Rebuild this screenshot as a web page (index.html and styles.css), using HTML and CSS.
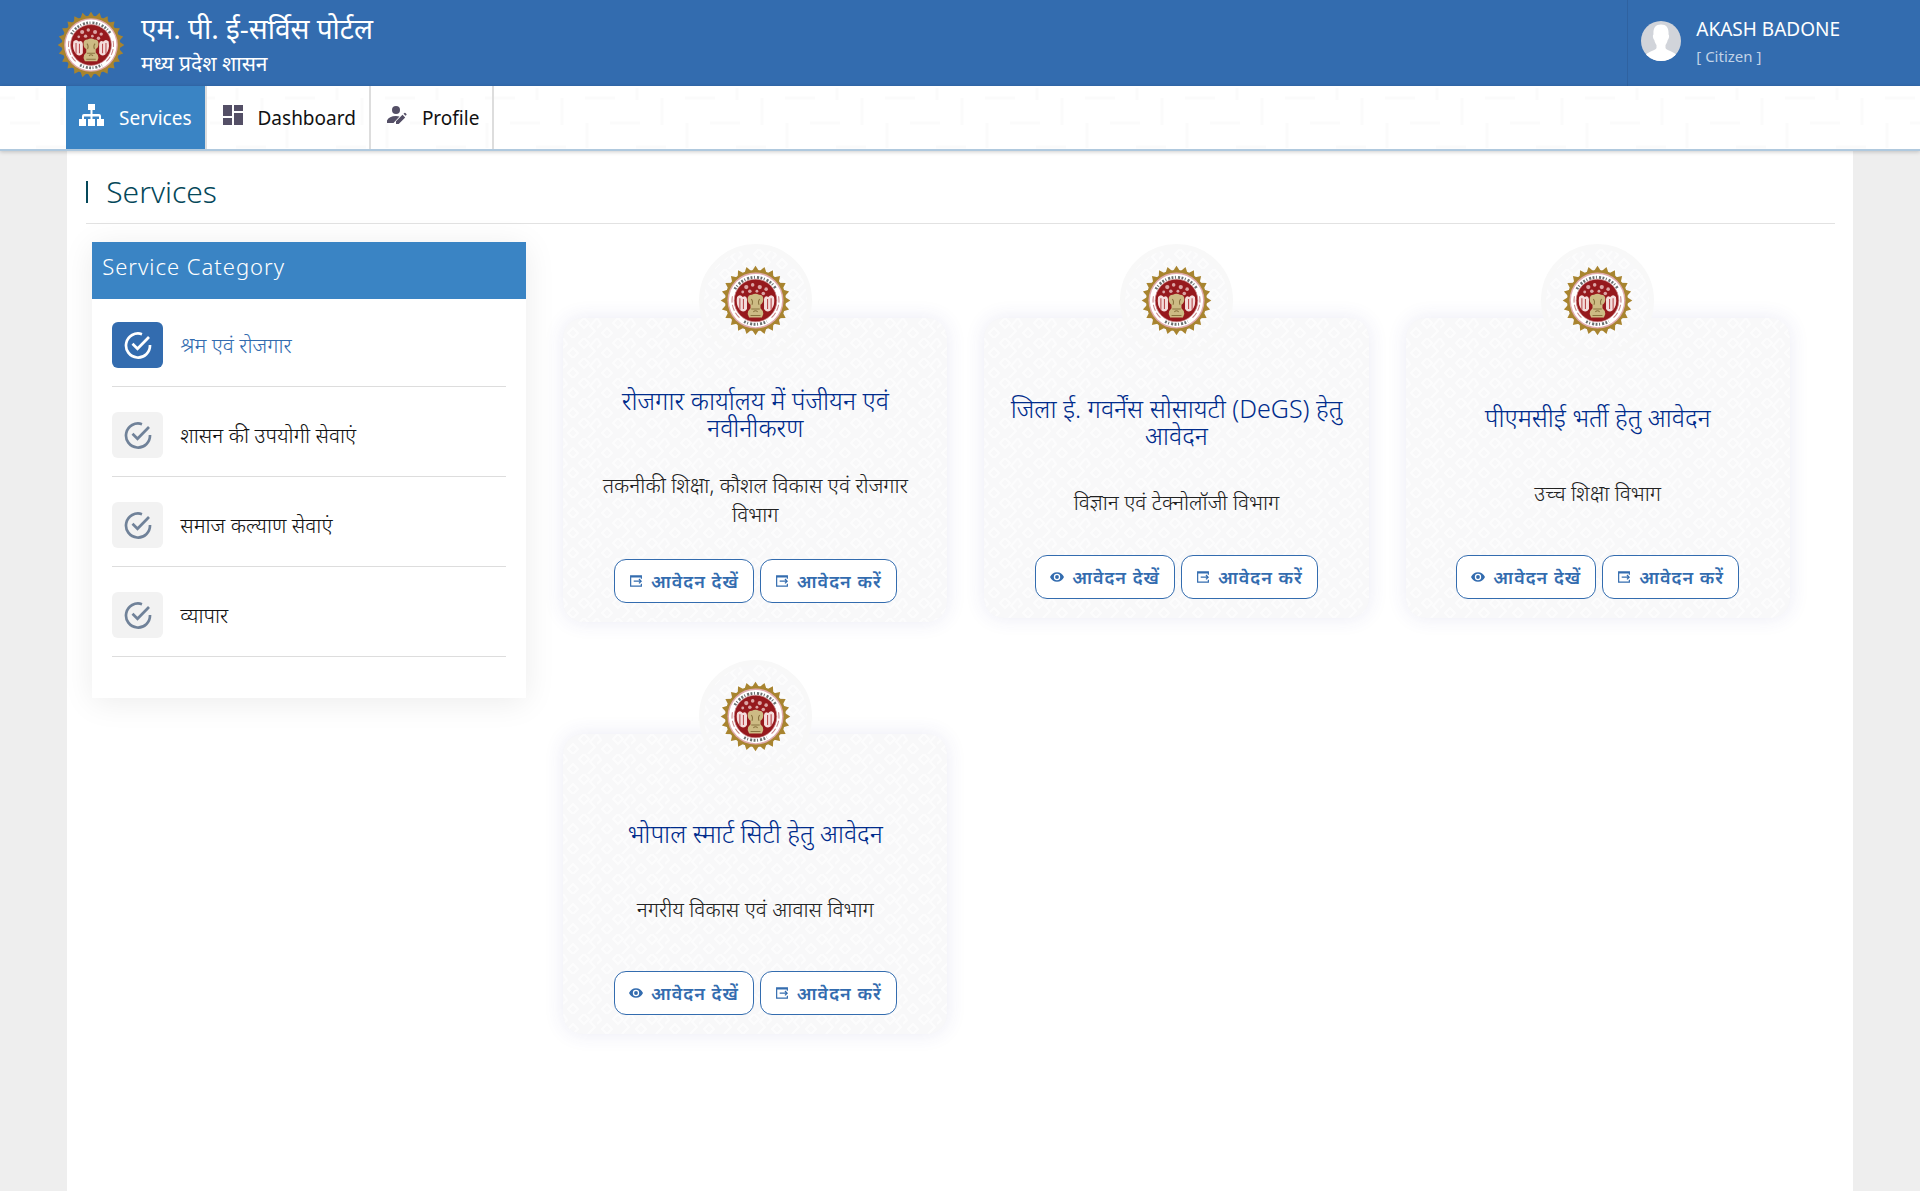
FILE: index.html
```html
<!DOCTYPE html>
<html lang="hi">
<head>
<meta charset="utf-8">
<meta name="viewport" content="width=device-width, initial-scale=1">
<title>एम. पी. ई-सर्विस पोर्टल</title>
<link rel="stylesheet" href="styles.css">
</head>
<body>
<svg class="sprite" aria-hidden="true">
  <defs>
    <g id="ray2"><path d="M43.500 11 50 1 56.500 11z"/><path d="M43.500 89 50 99 56.500 89z"/></g>
    <g id="ray4"><use href="#ray2"/><use href="#ray2" transform="rotate(90 50 50)"/></g>
    <g id="ray12"><use href="#ray4"/><use href="#ray4" transform="rotate(30 50 50)"/><use href="#ray4" transform="rotate(60 50 50)"/></g>
    <symbol id="emblem" viewBox="0 0 100 100">
      <g fill="#a8842f"><use href="#ray12"/><use href="#ray12" transform="rotate(15 50 50)"/><circle cx="50" cy="50" r="43"/></g>
      <circle cx="50" cy="50" r="39.500" fill="#dfa9ac"/>
      <circle cx="50" cy="50" r="37.500" fill="#fff"/>
      <path d="M21 34a33.500 33.500 0 0 1 58 0M34 79.500a33.500 33.500 0 0 0 32 0" fill="none" stroke="#454b4b" stroke-width="4" stroke-dasharray="2.600 2.200 1.400 2.800 3 2" opacity=".8"/>
      <path d="M17.500 44a33 33 0 0 0 12 32M82.500 44a33 33 0 0 1-12 32" fill="none" stroke="#c98588" stroke-width="1.500" stroke-dasharray="9 3"/>
      <circle cx="50" cy="50" r="30" fill="#96191d" stroke="#c98588" stroke-width="1"/>
      <g fill="#dba5a5"><circle cx="37" cy="31" r="3"/><circle cx="46" cy="28" r="2.500"/><circle cx="56" cy="31" r="3"/><circle cx="65" cy="34" r="2.500"/><circle cx="42" cy="37" r="2.500"/><circle cx="52" cy="37" r="2"/><circle cx="61" cy="40" r="2.500"/><circle cx="32" cy="38" r="2"/></g>
      <path d="M24 45q4-5 8 0q5-3 6 3v14q-4 6-9 2q-7-6-5-19zM76 45q-4-5-8 0q-5-3-6 3v14q4 6 9 2q7-6 5-19z" fill="#f4dddc"/>
      <path d="M28 47v16M33 48v14M72 47v16M67 48v14" stroke="#b9494c" stroke-width="1.500"/>
      <path d="M39 48q0-6 6-6q5-3 10 0q6 0 6 6q0 6-4 8v5q4 3 4 8l-2 5H41l-2-5q0-5 4-8v-5q-4-2-4-8z" fill="#cdbb84"/>
      <path d="M44 48q3 3 1 8m11-8q-3 3-1 8M44 62h12M47 66q3-3 6 0M43 71h14" fill="none" stroke="#8a7440" stroke-width="1.500"/>
    </symbol>
    <symbol id="i-sitemap" viewBox="0 0 25 22"><path d="M9 0h7v6h-2.500v4H20q2 0 2 2v3h3v7h-7v-7h2v-2.500h-6.500V15H16v7H9v-7h2.500v-2.500H5V15h2v7H0v-7h3v-3q0-2 2-2h6.500V6H9z"/></symbol>
    <symbol id="i-dash" viewBox="0 0 20 20"><path d="M0 0h9v11H0zM11 0h9v6h-9zM0 13h9v7H0zM11 8h9v12h-9z"/></symbol>
    <symbol id="i-useredit" viewBox="0 0 20 18"><circle cx="9" cy="4" r="4"/><path d="M0 17v-2.500Q2 10 9 10q2 0 3.500.4L6.500 17zM9 18v-2.700l6.500-6.500 2.700 2.700L11.700 18zM16.500 7.800l.9-.9q.5-.4 1 0l1 1q.4.500 0 1l-.9.900z"/></symbol>
    <symbol id="i-check" viewBox="0 0 28 28"><path d="M18 3.200A12 12 0 1 0 26 14M8.500 12.800l5 5L25 6" fill="none" stroke="currentColor" stroke-width="2.700"/></symbol>
    <symbol id="i-apply" viewBox="0 0 13 13"><path d="M12.300 4V1H.7v11h11.600V9.500M.7 2h11.600M4 6.700h8M9.700 4.300l2.400 2.400-2.400 2.400" fill="none" stroke="currentColor" stroke-width="1.300"/></symbol>
    <symbol id="i-eye" viewBox="0 0 22 15"><path fill-rule="evenodd" d="M11 0q7.500 0 11 7.500Q18.500 15 11 15T0 7.500Q3.500 0 11 0zm0 2.500a5 5 0 1 0 0 10 5 5 0 1 0 0-10zm0 2a3 3 0 1 1 0 6 3 3 0 1 1 0-6z"/></symbol>
  </defs>
</svg>

<header class="topbar">
  <div class="brand">
    <svg class="brand-logo" role="img" aria-label="मध्य प्रदेश शासन"><use href="#emblem"/></svg>
    <div>
      <div class="brand-title">एम. पी. ई-सर्विस पोर्टल</div>
      <div class="brand-sub">मध्य प्रदेश शासन</div>
    </div>
  </div>
  <div class="user">
    <svg class="avatar" viewBox="0 0 40 40" aria-hidden="true">
      <clipPath id="round"><circle cx="20" cy="20" r="20"/></clipPath>
      <g clip-path="url(#round)"><path fill="#d1d4da" d="M0 0h40v40H0z"/><path fill="#fff" d="M20 3.500c6 0 8 4 7.500 10 1.200.5.500 4.500-.8 5.500-.5 2.500-1.500 4-2.200 5v3c1 2.500 9 3.500 12 8V42H3.500v-7c3-4.500 11-5.500 12-8v-3c-.7-1-1.700-2.500-2.200-5-1.300-1-2-5-.8-5.500C12 7.500 14 3.500 20 3.500z"/></g>
    </svg>
    <div>
      <div class="user-name">AKASH BADONE</div>
      <div class="user-role">[ Citizen ]</div>
    </div>
  </div>
</header>

<nav class="nav">
  <a class="nav-link active" href="#services"><svg class="nav-icon sitemap"><use href="#i-sitemap"/></svg>Services</a>
  <a class="nav-link" href="#dashboard"><svg class="nav-icon"><use href="#i-dash"/></svg>Dashboard</a>
  <a class="nav-link" href="#profile"><svg class="nav-icon"><use href="#i-useredit"/></svg>Profile</a>
</nav>

<main class="page">
  <h1 class="page-title">Services</h1>
  <div class="layout">
    <aside class="sidebar">
      <h2 class="sidebar-title">Service Category</h2>
      <ul class="categories">
        <li><a class="category active" href="#c1"><span class="tick"><svg><use href="#i-check"/></svg></span>श्रम एवं रोजगार</a></li>
        <li><a class="category" href="#c2"><span class="tick"><svg><use href="#i-check"/></svg></span>शासन की उपयोगी सेवाएं</a></li>
        <li><a class="category" href="#c3"><span class="tick"><svg><use href="#i-check"/></svg></span>समाज कल्याण सेवाएं</a></li>
        <li><a class="category" href="#c4"><span class="tick"><svg><use href="#i-check"/></svg></span>व्यापार</a></li>
      </ul>
    </aside>
    <section class="cards">
      <article class="card">
        <div class="badge"><svg><use href="#emblem"/></svg></div>
        <h3 class="card-title">रोजगार कार्यालय में पंजीयन एवं नवीनीकरण</h3>
        <p class="dept">तकनीकी शिक्षा, कौशल विकास एवं रोजगार विभाग</p>
        <div class="actions">
          <button class="btn" type="button"><svg><use href="#i-apply"/></svg>आवेदन देखें</button>
          <button class="btn" type="button"><svg><use href="#i-apply"/></svg>आवेदन करें</button>
        </div>
      </article>
      <article class="card">
        <div class="badge"><svg><use href="#emblem"/></svg></div>
        <h3 class="card-title">जिला ई. गवर्नेंस सोसायटी (DeGS) हेतु आवेदन</h3>
        <p class="dept">विज्ञान एवं टेक्नोलॉजी विभाग</p>
        <div class="actions">
          <button class="btn" type="button"><svg><use href="#i-eye"/></svg>आवेदन देखें</button>
          <button class="btn" type="button"><svg><use href="#i-apply"/></svg>आवेदन करें</button>
        </div>
      </article>
      <article class="card">
        <div class="badge"><svg><use href="#emblem"/></svg></div>
        <h3 class="card-title">पीएमसीई भर्ती हेतु आवेदन</h3>
        <p class="dept">उच्च शिक्षा विभाग</p>
        <div class="actions">
          <button class="btn" type="button"><svg><use href="#i-eye"/></svg>आवेदन देखें</button>
          <button class="btn" type="button"><svg><use href="#i-apply"/></svg>आवेदन करें</button>
        </div>
      </article>
      <article class="card">
        <div class="badge"><svg><use href="#emblem"/></svg></div>
        <h3 class="card-title">भोपाल स्मार्ट सिटी हेतु आवेदन</h3>
        <p class="dept">नगरीय विकास एवं आवास विभाग</p>
        <div class="actions">
          <button class="btn" type="button"><svg><use href="#i-eye"/></svg>आवेदन देखें</button>
          <button class="btn" type="button"><svg><use href="#i-apply"/></svg>आवेदन करें</button>
        </div>
      </article>
    </section>
  </div>
</main>
</body>
</html>
```
FILE: styles.css
```css
:root {
  --blue: #336caf;
  --sky: #3a84c4;
  --knots: url("data:image/svg+xml,%3Csvg xmlns='http://www.w3.org/2000/svg' width='34' height='20'%3E%3Cg fill='none' stroke='%23fff' stroke-opacity='.6' stroke-width='2'%3E%3Cpath d='M10 10l5 5-5 5-5-5zM21 0l5 5-5 5-5-5zM25 20l7-7-5-5 7-8M0 10l4-4-4-6'/%3E%3C/g%3E%3C/svg%3E");
}
* { box-sizing: border-box; }
body {
  margin: 0;
  min-height: 100vh;
  display: flex;
  flex-direction: column;
  background: #eee;
  font-family: "Noto Sans", "Open Sans", sans-serif;
  color: #222;
}
svg { fill: currentColor; flex: none; }
.sprite { position: absolute; width: 0; height: 0; }

.topbar {
  display: flex;
  justify-content: space-between;
  height: 86px;
  padding: 0 80px 0 57px;
  background: var(--blue);
  color: #fff;
}
.brand { display: flex; align-items: center; gap: 16px; }
.brand-logo { width: 68px; height: 68px; margin-top: 4px; }
.brand-title { font-size: 28px; line-height: 40px; }
.brand-sub { font-size: 21px; line-height: 30px; }
.user {
  display: flex;
  gap: 15px;
  padding: 16px 0 0 13px;
  border-left: 1px solid #2f62a0;
}
.avatar { width: 40px; height: 40px; margin-top: 5px; }
.user-name { font-size: 19px; line-height: 26px; }
.user-role { font-size: 15px; line-height: 28px; color: #c2d3e7; }

.nav {
  display: flex;
  height: 65px;
  padding-left: 66px;
  border-bottom: 2px solid #b0c9de;
  box-shadow: 0 1px 4px rgba(0, 0, 0, .2);
  position: relative;
  background: #fff url("data:image/svg+xml,%3Csvg xmlns='http://www.w3.org/2000/svg' width='100' height='100'%3E%3Cpath d='M37 2v12M62 12v27M87 37v25M-15 12h30M85 12h30M10 37h30M36 61h30' stroke='%23fbfbfb' stroke-width='3' fill='none'/%3E%3C/svg%3E");
}
.nav-link {
  display: flex;
  align-items: center;
  gap: 15px;
  padding: 0 13px 0 16px;
  border-right: 2px solid #ddd;
  font-size: 19px;
  color: #111;
  text-decoration: none;
}
.nav-link.active { padding: 0 13px; background: var(--sky); background-clip: padding-box; color: #fff; }
.nav-icon { width: 20px; height: 20px; color: #544f66; margin-bottom: 6px; }
.nav-icon.sitemap { width: 25px; height: 22px; color: #fff; }

.page {
  flex: 1;
  width: 93%;
  margin: 0 auto;
  padding: 19px 18px 0 19px;
  background: #fff;
}
.page-title {
  display: flex;
  align-items: center;
  gap: 18px;
  height: 54px;
  margin: 0 0 18px;
  padding-bottom: 10px;
  border-bottom: 1px solid #e2e2e2;
  font-size: 30px;
  font-weight: 300;
  color: #05485a;
}
.page-title::before { content: ""; width: 2px; height: 22px; background: #05485a; }

.layout { display: grid; grid-template-columns: 434px 1fr; gap: 37px; padding: 0 45px 0 6px; align-items: start; }
.sidebar { background: #fff; box-shadow: 0 4px 30px rgba(0, 0, 0, .08); }
.sidebar-title {
  height: 57px;
  margin: 0;
  padding: 8px 10px;
  background: var(--sky);
  color: #fff;
  font-size: 22px;
  line-height: 32px;
  font-weight: 300;
  letter-spacing: 1px;
}
.categories {
  display: grid;
  gap: 10px;
  margin: 0;
  padding: 8px 20px 41px;
  list-style: none;
}
.category {
  display: flex;
  align-items: center;
  gap: 17px;
  padding: 15px 0 18px;
  border-bottom: 1px solid #ddd;
  color: #111;
  font-size: 21px;
  line-height: 30px;
  font-weight: 300;
  text-decoration: none;
}
.category.active { color: var(--blue); }
.tick {
  display: grid;
  place-items: center;
  width: 51px;
  height: 46px;
  border-radius: 6px;
  background: #f2f2f2;
  color: #708299;
}
.tick svg { width: 28px; height: 28px; }
.active .tick { background: var(--blue); color: #fff; }

.cards {
  display: grid;
  grid-template-columns: repeat(3, 1fr);
  gap: 112px 37px;
  padding-top: 76px;
  align-items: start;
}
.card {
  display: flex;
  flex-direction: column;
  justify-content: space-between;
  align-items: center;
  gap: 30px;
  min-height: 300px;
  padding: 0 20px 19px;
  border-radius: 20px;
  background: #f8f8f9 var(--knots);
  box-shadow: 0 0 20px rgba(60, 60, 160, .1);
  text-align: center;
}
.badge {
  display: grid;
  place-items: center;
  width: 113px;
  height: 113px;
  margin-top: -74px;
  border: 5px solid #f8f8f8;
  border-radius: 50%;
  background: #f8f8f9 var(--knots);
}
.badge svg { width: 71px; height: 71px; }
.card-title { margin: 0; color: #002c8c; font-size: 25px; line-height: 27px; font-weight: 300; }
.dept { margin: 0; color: #222; font-size: 21px; line-height: 29px; font-weight: 300; }
.actions { display: flex; gap: 6px; }
.btn {
  display: flex;
  align-items: center;
  gap: 8px;
  height: 44px;
  padding: 0 14px;
  border: 1px solid var(--blue);
  border-radius: 12px;
  background: #fff;
  color: var(--blue);
  font: 600 18px/24px "Noto Sans", sans-serif;
  letter-spacing: 1px;
}
.btn svg { width: 14px; height: 12px; }
```
